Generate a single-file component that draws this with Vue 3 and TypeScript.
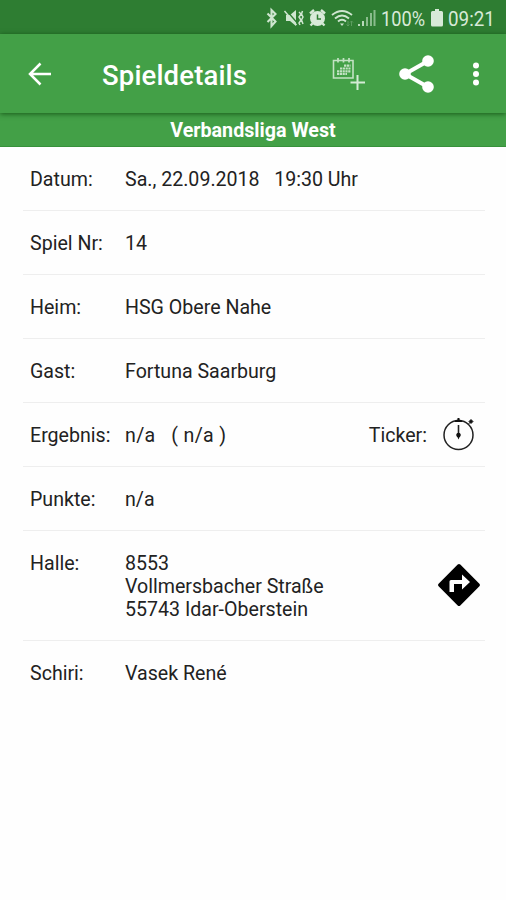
<script setup lang="ts">
interface DetailRow {
  label: string
  lines: string[]
  action?: 'ticker' | 'route'
}

const rows: DetailRow[] = [
  { label: 'Datum:', lines: ['Sa., 22.09.2018   19:30 Uhr'] },
  { label: 'Spiel Nr:', lines: ['14'] },
  { label: 'Heim:', lines: ['HSG Obere Nahe'] },
  { label: 'Gast:', lines: ['Fortuna Saarburg'] },
  { label: 'Ergebnis:', lines: ['n/a   ( n/a )'], action: 'ticker' },
  { label: 'Punkte:', lines: ['n/a'] },
  { label: 'Halle:', lines: ['8553', 'Vollmersbacher Straße', '55743 Idar-Oberstein'], action: 'route' },
  { label: 'Schiri:', lines: ['Vasek René'] },
]
</script>

<template>
  <div class="screen">
    <div class="status">
      <svg class="status-icons" width="112" height="22" viewBox="0 0 112 22">
        <path d="M2.500 6.500l8 8-4 4.500V3l4 4-8 8" fill="none" stroke="#cfe6d0" stroke-width="2.100" />
        <path d="M21 8h4l6-5v16l-6-5h-4z" fill="#cfe6d0" />
        <path d="M21 3l13 15" stroke="#2e7d32" stroke-width="1.300" />
        <path d="M19.500 4l12 14M34 5l2 2-2 3 2 3-2 3 1 2M37.500 4l-1 3 1.500 3-1.500 3 1.500 4" fill="none" stroke="#cfe6d0" stroke-width="1.500" />
        <circle cx="52.500" cy="11.500" r="7.500" fill="#d8ead8" />
        <path d="M45 6.500l4-3.500M60 6.500l-4-3.500M47.500 16.500l-2 2M57.500 16.500l2 2" fill="none" stroke="#d8ead8" stroke-width="2.400" />
        <path d="M52.500 7.500v4.500h3.500" fill="none" stroke="#2e7d32" stroke-width="1.500" />
        <path d="M67 8q10-8 20 0M70 11.500q7-6 14 0M73 14.500q4-3.500 8 0" fill="none" stroke="#cfe6d0" stroke-width="1.900" />
        <path d="M75 16.500h4l-2 2.500z" fill="#cfe6d0" />
        <path d="M83 14v5M81.500 17.500l1.500 1.500 1.500-1.500M86.500 19v-5M85 15.500l1.500-1.500 1.500 1.500" fill="none" stroke="#5c9d5f" />
        <path d="M93 17h2v2h-2zM97 14h2v5h-2z" fill="#b9d9ba" />
        <path d="M101 10h2v9h-2zM105 6h2v13h-2zM108.500 3h2v16h-2z" fill="#8abc8c" />
      </svg>
      <span class="percent">100%</span>
      <svg class="battery" width="12" height="18" viewBox="0 0 12 18">
        <path d="M4 0h4v2h2.500q1.500 0 1.500 1.500V16q0 1.500-1.500 1.500h-9Q0 17.500 0 16V3.500Q0 2 1.500 2H4z" fill="#d8ead8" />
      </svg>
      <span class="clock">09:21</span>
    </div>

    <header class="toolbar">
      <svg class="back" width="24" height="24" viewBox="0 0 24 24">
        <path d="M23 12H2M12.500 1.500L2 12l10.500 10.500" fill="none" stroke="#fff" stroke-width="2.500" />
      </svg>
      <h1>Spieldetails</h1>
      <svg class="calendar" width="34" height="34" viewBox="0 0 34 34" fill="none">
        <path d="M1.500 3.500h19.500v17.500h-19.500z" stroke="#c3e2c4" stroke-width="1.600" />
        <path d="M6 1v4.500M11.500 1v4.500M17 1v4.500" stroke="#c3e2c4" stroke-width="1.700" />
        <path d="M12 8.700h6.500M8 11.500h10.500M5 14.300h13.500M5 17h10" stroke="#c3e2c4" stroke-width="2.200" stroke-dasharray="2.200 .6" />
        <path d="M25.500 18v15M18.500 25.500h14.500" stroke="#d4ebd5" stroke-width="2" />
      </svg>
      <svg class="share" width="36" height="38" viewBox="0 0 36 38">
        <path d="M29 6L6 19l23 13" fill="none" stroke="#fff" stroke-width="4" />
        <g fill="#fff">
          <circle cx="29" cy="6" r="5.800" />
          <circle cx="6" cy="19" r="5.800" />
          <circle cx="29" cy="32" r="5.800" />
        </g>
      </svg>
      <svg class="more" width="8" height="24" viewBox="0 0 8 24" fill="#fff">
        <circle cx="4" cy="3.500" r="3" />
        <circle cx="4" cy="12" r="3" />
        <circle cx="4" cy="20.500" r="3" />
      </svg>
    </header>

    <div class="league">Verbandsliga West</div>

    <main class="details">
      <section v-for="row in rows" :key="row.label" class="row">
        <span class="label">{{ row.label }}</span>
        <div class="value" :class="{ result: row.action === 'ticker' }">
          <div v-for="line in row.lines" :key="line">{{ line }}</div>
        </div>
        <div v-if="row.action === 'ticker'" class="ticker">
          <span>Ticker:</span>
          <svg width="32" height="34" viewBox="0 0 32 34">
            <circle cx="15.500" cy="18" r="14.500" fill="none" stroke="#222" stroke-width="1.500" />
            <path d="M15.500 8v10" stroke="#222" stroke-width="1.600" />
            <path d="M11.500 5q.5-2 3-2.500V1h2v1.500q2.500.5 3 2.500zM13.300 17.500h4.400L15.500 22.500z" fill="#111" />
            <circle cx="15.500" cy="18" r="2.200" fill="#111" />
            <path d="M26 4.500l2-2 2 2-2 2zM25.500 7l2-2" fill="#111" stroke="#111" stroke-width=".9" />
          </svg>
        </div>
        <svg v-if="row.action === 'route'" class="route" width="44" height="44" viewBox="0 0 44 44">
          <path d="M20.700 1.600q1.300-1.300 2.600 0l19.100 19.100q1.300 1.300 0 2.600L23.300 42.400q-1.300 1.300-2.600 0L1.600 23.300q-1.300-1.300 0-2.600z" fill="#000" />
          <path d="M12.500 29V18.500q0-1.500 1.500-1.500H25v-5.500l8 7.500-8 7.500v-5.500h-8V29z" fill="#fff" />
        </svg>
      </section>
    </main>
  </div>
</template>

<style>
body {
  margin: 0;
  background: #fefefe;
}
</style>

<style scoped>
.screen {
  width: 506px;
  height: 900px;
  overflow: hidden;
  background: #fefefe;
  font-family: Roboto, "Liberation Sans", sans-serif;
  color: #222;
}

.status {
  display: flex;
  align-items: center;
  box-sizing: border-box;
  height: 34px;
  padding: 2px 0 0 265px;
  background: #2e7d32;
  color: #d8ead8;
  font-size: 20px;
}

.status-icons,
.battery,
.percent,
.clock {
  flex: none;
}

.percent,
.clock {
  padding-top: 1px;
}

.percent {
  width: 50px;
  margin-left: 4px;
  transform: scaleX(0.91);
  transform-origin: left;
}

.clock {
  margin-left: 5px;
  transform: scaleX(0.94);
  transform-origin: left;
}

.toolbar {
  position: relative;
  display: flex;
  align-items: center;
  height: 79px;
  padding-left: 28px;
  background: #43a047;
  box-shadow: 0 1px 5px rgba(0, 50, 0, 0.65);
}

h1 {
  width: 181px;
  margin: 3px 0 0 50px;
  font-size: 27.500px;
  font-weight: 500;
  letter-spacing: 0.150px;
  color: #fff;
}

.calendar {
  margin-left: 49px;
}

.share {
  margin-left: 33px;
}

.more {
  margin-left: 37px;
}

.league {
  box-sizing: border-box;
  height: 34px;
  padding-top: 1px;
  border-bottom: 1px solid #37913b;
  background: #43a047;
  color: #fff;
  font-size: 19.700px;
  font-weight: 700;
  line-height: 33px;
  text-align: center;
}

.details {
  padding: 0 21px 0 23px;
  font-size: 19.600px;
  line-height: 23px;
}

.row {
  display: flex;
  box-sizing: border-box;
  min-height: 64px;
  padding: 21px 0 19px 7px;
  border-bottom: 1px solid #eee;
}

.row:last-child {
  border-bottom: 0;
}

.label {
  width: 95px;
  flex: none;
}

.value {
  flex: 1;
  white-space: pre;
}

.result {
  letter-spacing: 0.350px;
}

.ticker {
  display: flex;
  gap: 16px;
  height: 23px;
  margin-right: 10px;
}

.ticker svg {
  flex: none;
  margin-top: -7px;
}

.route {
  align-self: center;
  margin: -4px 4px 0 0;
}
</style>
